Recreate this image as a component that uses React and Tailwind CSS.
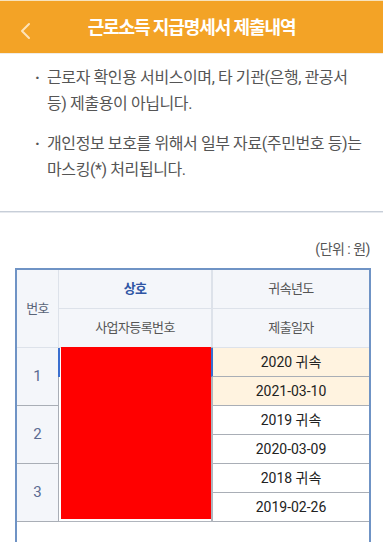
import React from 'react';

const notices = [
  '근로자 확인용 서비스이며, 타 기관(은행, 관공서 등) 제출용이 아닙니다.',
  '개인정보 보호를 위해서 일부 자료(주민번호 등)는 마스킹(*) 처리됩니다.',
];

const rows = [
  { no: 1, year: '2020 귀속', date: '2021-03-10', active: true },
  { no: 2, year: '2019 귀속', date: '2020-03-09' },
  { no: 3, year: '2018 귀속', date: '2019-02-26' },
];

export default function App() {
  return (
    <div className="w-full h-[542px] overflow-hidden bg-white font-['Roboto','Noto_Sans_CJK_KR',sans-serif]">
      {/* top bar */}
      <div className="relative flex items-center justify-center h-[54px] bg-[#f3a326] border-t border-[#f7e3bd] border-b border-b-[#f1ece4]">
        <svg className="absolute left-[19px] top-[21px]" width="13" height="18" viewBox="0 0 13 18">
          <path d="M10 2 L3 9 L10 16" fill="none" stroke="#fde3b8" strokeWidth="2" strokeLinecap="round" strokeLinejoin="round" />
        </svg>
        <h1 className="text-[18px] font-bold tracking-[-1.1px] text-white">근로소득 지급명세서 제출내역</h1>
      </div>

      {/* notices */}
      <div className="pt-[11px] pb-[28px] border-b border-[#c7ced8]">
        {notices.map((t, i) => (
          <p key={i} className={`relative pl-[47px] pr-[16px] text-[16px] leading-[26px] tracking-[-0.4px] break-keep text-[#555] ${i === 0 ? 'mb-[14px]' : ''}`}>
            <span className="absolute left-[35px] top-0 font-bold">·</span>
            {t}
          </p>
        ))}
      </div>
      <div className="h-px bg-[#e6e9ee]" />

      <p className="pt-[26px] pr-[13px] text-right text-[14px] leading-[20px] tracking-[-0.5px] text-[#555]">(단위 : 원)</p>

      {/* table */}
      <div className="mt-[9px] ml-[15px] w-[356px] h-[300px] border-x-2 border-t-2 border-[#6f93c5]">
        <div className="flex h-[78px] bg-[#f4f6fa] border-b border-[#dde2ea] text-[13px] tracking-[-0.6px] text-[#555]">
          <div className="w-[42px] flex items-center justify-center border-r border-[#dde2ea] text-[#5a6478]">번호</div>
          <div className="flex-1 flex flex-col">
            <div className="flex h-[39px] border-b border-[#dde2ea]">
              <div className="w-[154px] flex items-center justify-center border-r-2 border-[#dde2ea] font-bold text-[#2f55a4]">상호</div>
              <div className="flex-1 flex items-center justify-center">귀속년도</div>
            </div>
            <div className="flex h-[38px]">
              <div className="w-[154px] flex items-center justify-center border-r-2 border-[#dde2ea]">사업자등록번호</div>
              <div className="flex-1 flex items-center justify-center">제출일자</div>
            </div>
          </div>
        </div>

        <div className="grid grid-cols-[42px_154px_1fr] grid-rows-[repeat(6,29px)] text-[14px] text-[#222]">
          {rows.map((r, i) => (
            <div key={'n' + i} className="flex items-center justify-center bg-[#f4f6fa] border-r border-b border-[#a9aeb6] text-[15px] text-[#5b6b92]" style={{ gridRow: `${i * 2 + 1} / span 2`, gridColumn: 1 }}>
              {r.no}
            </div>
          ))}
          <div className="row-span-6 col-start-2 row-start-1 pl-[2px] pb-[2px] -mt-px border-r-2 border-b border-[#b0b5bd]">
            <div className="relative w-[150px] h-full bg-[#ff0000]">
              <div className="absolute -left-[3px] top-px w-[2px] h-[29px] bg-[#3a6fcf]" />
            </div>
          </div>
          {rows.flatMap((r, i) => [
            <div key={'y' + i} className={`flex items-center justify-center border-b border-[#a9aeb6] ${r.active ? 'bg-[#fff3e0] border-l-2 border-l-[#3a6fcf] -ml-[2px]' : 'bg-white'}`} style={{ gridRow: i * 2 + 1, gridColumn: 3 }}>
              {r.year}
            </div>,
            <div key={'d' + i} className={`flex items-center justify-center border-b border-[#a9aeb6] ${r.active ? 'bg-[#fff3e0]' : 'bg-white'}`} style={{ gridRow: i * 2 + 2, gridColumn: 3 }}>
              {r.date}
            </div>,
          ])}
        </div>
      </div>
    </div>
  );
}
